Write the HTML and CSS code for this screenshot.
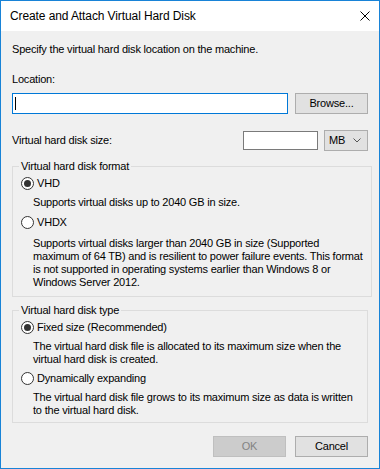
FILE: index.html
```html
<!DOCTYPE html>
<html lang="en">
<head>
    <meta charset="UTF-8">
    <title>Create and Attach Virtual Hard Disk</title>
    <link rel="stylesheet" href="styles.css">
</head>
<body>
    <div class="window">
        <div class="title-bar">
            <span class="title">Create and Attach Virtual Hard Disk</span>
            <svg class="close" width="10" height="10" viewBox="0 0 10 10">
                <path d="M0.5 0.5 L9.5 9.5 M9.5 0.5 L0.5 9.5" stroke="#000" stroke-width="1" fill="none"/>
            </svg>
        </div>

        <div class="content">
            <p class="intro">Specify the virtual hard disk location on the machine.</p>

            <label class="field-label">Location:</label>
            <div class="location-row">
                <div class="textbox focused"><span class="caret"></span></div>
                <div class="button">Browse...</div>
            </div>

            <div class="size-row">
                <span class="size-label">Virtual hard disk size:</span>
                <div class="textbox size-box"></div>
                <div class="combo">
                    <span>MB</span>
                    <svg width="8" height="5" viewBox="0 0 8 5">
                        <path d="M0.5 0.5 L4 4 L7.5 0.5" stroke="#555" stroke-width="1" fill="none"/>
                    </svg>
                </div>
            </div>

            <fieldset class="group format-group">
                <legend>Virtual hard disk format</legend>
                <div class="radio-row">
                    <span class="radio checked"></span>
                    <span>VHD</span>
                </div>
                <p class="desc">Supports virtual disks up to 2040 GB in size.</p>
                <div class="radio-row next">
                    <span class="radio"></span>
                    <span>VHDX</span>
                </div>
                <p class="desc para">Supports virtual disks larger than 2040 GB in size (Supported<br>maximum of 64 TB) and is resilient to power failure events. This format<br>is not supported in operating systems earlier than Windows 8 or<br>Windows Server 2012.</p>
            </fieldset>

            <fieldset class="group type-group">
                <legend>Virtual hard disk type</legend>
                <div class="radio-row">
                    <span class="radio checked"></span>
                    <span>Fixed size (Recommended)</span>
                </div>
                <p class="desc">The virtual hard disk file is allocated to its maximum size when the<br>virtual hard disk is created.</p>
                <div class="radio-row next-small">
                    <span class="radio"></span>
                    <span>Dynamically expanding</span>
                </div>
                <p class="desc">The virtual hard disk file grows to its maximum size as data is written<br>to the virtual hard disk.</p>
            </fieldset>

            <div class="actions">
                <div class="button disabled">OK</div>
                <div class="button">Cancel</div>
            </div>
        </div>
    </div>
</body>
</html>
```

FILE: styles.css
```css
* {
    margin: 0;
    padding: 0;
    box-sizing: border-box;
}

body {
    font-family: "Segoe UI", "Liberation Sans", Arial, sans-serif;
    font-size: 11px;
    letter-spacing: -0.2px;
    color: #000;
    background: #f0f0f0;
}

.window {
    width: 380px;
    height: 469px;
    border: 1px solid #1883d7;
    background: #f0f0f0;
    display: flex;
    flex-direction: column;
}

.title-bar {
    height: 30px;
    background: #fff;
    display: flex;
    align-items: center;
    justify-content: space-between;
    padding: 0 9px 0 9px;
}

.title {
    font-size: 12px;
    line-height: 13px;
    letter-spacing: -0.1px;
}

.close {
    display: block;
}

.content {
    padding: 12px 11px 0 11px;
    display: flex;
    flex-direction: column;
    line-height: 13px;
}

.intro {
    height: 13px;
}

.field-label {
    margin-top: 17px;
    height: 13px;
}

.location-row {
    margin-top: 7px;
    display: flex;
    gap: 7px;
}

.textbox {
    height: 21px;
    background: #fff;
    border: 1px solid #7a7a7a;
    position: relative;
}

.location-row .textbox {
    flex: 1;
}

.textbox.focused {
    border-color: #0078d7;
}

.caret {
    position: absolute;
    left: 2px;
    top: 3px;
    width: 1px;
    height: 13px;
    background: #000;
}

.button {
    width: 73px;
    height: 21px;
    background: #e1e1e1;
    border: 1px solid #adadad;
    display: flex;
    align-items: center;
    justify-content: center;
}

.button.disabled {
    background: #cccccc;
    border-color: #bfbfbf;
    color: #838383;
}

.size-row {
    margin-top: 16px;
    display: flex;
    align-items: center;
}

.size-label {
    flex: 1;
}

.size-box {
    width: 75px;
    height: 19px;
}

.combo {
    margin-left: 6px;
    width: 44px;
    height: 21px;
    background: #e1e1e1;
    border: 1px solid #adadad;
    display: flex;
    align-items: center;
    justify-content: space-between;
    padding: 0 6px 0 4px;
}

.combo svg {
    display: block;
}

.group {
    border: 1px solid #dcdcdc;
    padding: 3px 8px 7px 8px;
}

.format-group {
    margin-top: 9px;
}

.type-group {
    margin-top: 7px;
    padding-bottom: 5px;
}

.group legend {
    margin-left: -2px;
    padding: 0 2px;
    line-height: 13px;
}

.radio-row {
    display: flex;
    align-items: center;
    gap: 3px;
    height: 15px;
}

.radio-row.next {
    margin-top: 6px;
}

.radio-row.next-small {
    margin-top: 5px;
}

.radio {
    width: 13px;
    height: 13px;
    border: 1px solid #333;
    border-radius: 50%;
    background: #fff;
    display: flex;
    align-items: center;
    justify-content: center;
}

.radio.checked::after {
    content: "";
    width: 7px;
    height: 7px;
    border-radius: 50%;
    background: #333;
}

.desc {
    margin-top: 5px;
    padding-left: 12px;
    white-space: nowrap;
}

.desc.para {
    margin-top: 7px;
}

.actions {
    margin-top: 13px;
    display: flex;
    justify-content: flex-end;
    gap: 9px;
}
```
